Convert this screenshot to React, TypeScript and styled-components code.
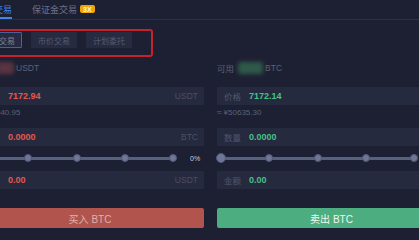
import styled, { createGlobalStyle } from "styled-components";

const GlobalStyle = createGlobalStyle`
  html, body {
    margin: 0;
    padding: 0;
    background: #1d2033;
    overflow: hidden;
  }
  * {
    box-sizing: border-box;
  }
`;

const Page = styled.div`
  width: 480px;
  height: 240px;
  margin-left: -24px;
  font-family: "Liberation Sans", "Noto Sans CJK SC", sans-serif;
  color: #5b6075;
`;

const TabBar = styled.div`
  display: flex;
  align-items: stretch;
  height: 20px;
  border-bottom: 1px solid #2b3047;
`;

const Tab = styled.div<{ $active?: boolean }>`
  display: flex;
  align-items: center;
  gap: 3px;
  margin-right: 20px;
  font-size: 9px;
  color: ${(p) => (p.$active ? "#3f86e6" : "#6b7187")};
  border-bottom: 2px solid ${(p) => (p.$active ? "#3f86e6" : "transparent")};
  padding-top: 1px;
`;

const Badge = styled.span`
  display: inline-flex;
  align-items: center;
  justify-content: center;
  height: 8px;
  padding: 0 3px;
  border-radius: 2px;
  background: #eea50c;
  color: #fff6df;
  font-size: 7px;
  font-weight: bold;
  line-height: 1;
`;

const Highlight = styled.div`
  display: inline-flex;
  gap: 9px;
  margin: 9px 0 0 -3px;
  padding: 1px 19px 7px 1px;
  border: 2px solid #c9212b;
  border-radius: 3px;
`;

const ModeButton = styled.div<{ $active?: boolean }>`
  width: 46px;
  height: 16px;
  display: flex;
  align-items: center;
  justify-content: center;
  font-size: 8px;
  background: #272b41;
  color: ${(p) => (p.$active ? "#7b839e" : "#555a70")};
  border: 1px solid ${(p) => (p.$active ? "#4b5f98" : "transparent")};
  border-radius: 1px;
`;

const Columns = styled.div`
  display: grid;
  grid-template-columns: 228px 229px;
  column-gap: 13px;
`;

const Column = styled.div`
  display: flex;
  flex-direction: column;
`;

const Balance = styled.div`
  display: flex;
  align-items: center;
  height: 13px;
  margin-top: 4px;
  font-size: 8.5px;
  color: #5b6075;
`;

const Blur = styled.span<{ $tone: "red" | "green"; $width: number }>`
  display: inline-block;
  width: ${(p) => p.$width}px;
  height: 12px;
  margin: 0 2px 0 4px;
  border-radius: 3px;
  background: ${(p) => (p.$tone === "red" ? "#5a3442" : "#2f5a4a")};
  filter: blur(2px);
`;

const Field = styled.div<{ $gap?: number }>`
  display: flex;
  align-items: center;
  height: 18px;
  margin-top: ${(p) => p.$gap ?? 0}px;
  padding: 0 6px 0 7px;
  background: #262a3f;
  border-radius: 1px;
`;

const FieldLabel = styled.span`
  width: 25px;
  font-size: 8.5px;
  color: #50566d;
`;

const Value = styled.span<{ $side: "buy" | "sell" }>`
  flex: 1;
  font-size: 9px;
  font-weight: bold;
  color: ${(p) => (p.$side === "buy" ? "#e2584c" : "#47c187")};
`;

const Unit = styled.span`
  font-size: 8.5px;
  color: #4a4f66;
`;

const Sub = styled.div`
  height: 10px;
  margin-top: 3px;
  font-size: 8px;
  line-height: 10px;
  color: #5b6075;
`;

const SliderRow = styled.div`
  display: flex;
  align-items: center;
  height: 25px;
`;

const Track = styled.div`
  position: relative;
  width: 201px;
  height: 100%;
  margin: 0 4px;
  flex: none;
  &::before {
    content: "";
    position: absolute;
    left: 0;
    right: 8px;
    top: 11px;
    height: 3px;
    background: #566080;
    border-radius: 2px;
  }
`;

const Dot = styled.span<{ $big?: boolean }>`
  position: absolute;
  top: 50%;
  width: ${(p) => (p.$big ? 10 : 8)}px;
  height: ${(p) => (p.$big ? 10 : 8)}px;
  margin-left: ${(p) => (p.$big ? -5 : -4)}px;
  margin-top: ${(p) => (p.$big ? -5.5 : -4.5)}px;
  border-radius: 50%;
  background: #6e7695;
  border: 1px solid #4f5878;
`;

const Percent = styled.span`
  margin-left: 5px;
  font-size: 7px;
  color: #c9cdd8;
`;

const ActionButton = styled.div<{ $side: "buy" | "sell" }>`
  display: flex;
  align-items: center;
  justify-content: center;
  height: 20px;
  margin-top: 19px;
  border-radius: 2px;
  font-size: 10px;
  background: ${(p) => (p.$side === "buy" ? "#b1544e" : "#4cae80")};
  color: ${(p) => (p.$side === "buy" ? "#dfb1a8" : "#eef8f2")};
`;

const stops = [0, 25, 50, 75, 100];

function Slider({ showPercent }: { showPercent?: boolean }) {
  return (
    <SliderRow>
      <Track>
        {stops.map((s) => (
          <Dot key={s} $big={s === 0} style={{ left: `${(s / 100) * 193}px` }} />
        ))}
      </Track>
      {showPercent && <Percent>0%</Percent>}
    </SliderRow>
  );
}

export default function App() {
  return (
    <Page>
      <GlobalStyle />
      <TabBar>
        <Tab $active>币币交易</Tab>
        <Tab>
          保证金交易<Badge>3X</Badge>
        </Tab>
      </TabBar>

      <Highlight>
        <ModeButton $active>限价交易</ModeButton>
        <ModeButton>市价交易</ModeButton>
        <ModeButton>计划委托</ModeButton>
      </Highlight>

      <Columns>
        <Column>
          <Balance>
            可用<Blur $tone="red" $width={17} />USDT
          </Balance>
          <Field $gap={13}>
            <FieldLabel>价格</FieldLabel>
            <Value $side="buy">7172.94</Value>
            <Unit>USDT</Unit>
          </Field>
          <Sub>≈ ¥50640.95</Sub>
          <Field $gap={10}>
            <FieldLabel>数量</FieldLabel>
            <Value $side="buy">0.0000</Value>
            <Unit>BTC</Unit>
          </Field>
          <Slider showPercent />
          <Field>
            <FieldLabel>金额</FieldLabel>
            <Value $side="buy">0.00</Value>
            <Unit>USDT</Unit>
          </Field>
          <ActionButton $side="buy">买入 BTC</ActionButton>
        </Column>

        <Column>
          <Balance>
            可用<Blur $tone="green" $width={25} />BTC
          </Balance>
          <Field $gap={13}>
            <FieldLabel>价格</FieldLabel>
            <Value $side="sell">7172.14</Value>
          </Field>
          <Sub>≈ ¥50635.30</Sub>
          <Field $gap={10}>
            <FieldLabel>数量</FieldLabel>
            <Value $side="sell">0.0000</Value>
          </Field>
          <Slider />
          <Field>
            <FieldLabel>金额</FieldLabel>
            <Value $side="sell">0.00</Value>
          </Field>
          <ActionButton $side="sell">卖出 BTC</ActionButton>
        </Column>
      </Columns>
    </Page>
  );
}
